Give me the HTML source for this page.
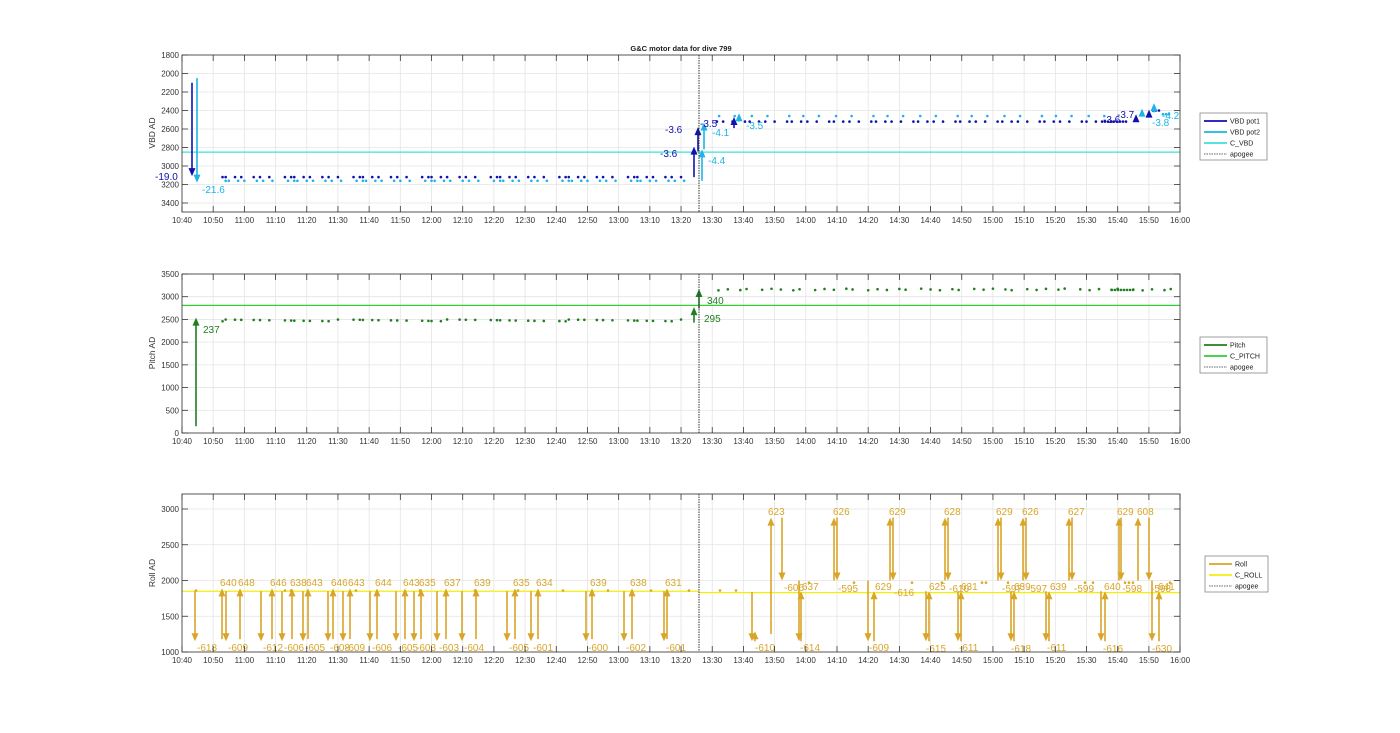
<!DOCTYPE html>
<html><head><meta charset="utf-8"><style>
html,body{margin:0;padding:0;background:#fff;}
svg{display:block;font-family:"Liberation Sans",sans-serif;}
</style></head><body>
<svg id="s" width="1400" height="733" viewBox="0 0 1400 733" xmlns="http://www.w3.org/2000/svg">
<rect width="1400" height="733" fill="#fff"/>
<text x="681" y="51" font-size="7.5" font-weight="bold" text-anchor="middle" fill="#222">G&amp;C motor data for dive 799</text>
<g id="g"></g>
</svg>
<script>
var NS="http://www.w3.org/2000/svg",G=document.getElementById('g');
function el(t,a,txt){var e=document.createElementNS(NS,t);for(var k in a)e.setAttribute(k,a[k]);if(txt!=null)e.textContent=txt;G.appendChild(e);return e;}
var L=182,R=1180;
function X(m){return L+(m-640)*3.119;}
function axes(top,bot,yticks,ymap){
  for(var m=640;m<=960;m+=10){var x=X(m);el('line',{x1:x,y1:top,x2:x,y2:bot,stroke:'#e4e4e4','stroke-width':0.8});}
  yticks.forEach(function(v){var y=ymap(v);el('line',{x1:L,y1:y,x2:R,y2:y,stroke:'#e4e4e4','stroke-width':0.8});});
}
function frame(top,bot,yticks,ymap,ylabel,ly){
  el('rect',{x:L,y:top,width:R-L,height:bot-top,fill:'none',stroke:'#444','stroke-width':0.9});
  for(var m=640;m<=960;m+=10){var x=X(m);el('line',{x1:x,y1:top,x2:x,y2:top+6,stroke:'#333','stroke-width':0.8});el('line',{x1:x,y1:bot,x2:x,y2:bot-6,stroke:'#333','stroke-width':0.8});
    var h=Math.floor(m/60),mm=m%60;el('text',{x:x,y:bot+11,'font-size':8,'text-anchor':'middle',fill:'#333'},h+':'+(mm<10?'0':'')+mm);}
  yticks.forEach(function(v){var y=ymap(v);el('line',{x1:L,y1:y,x2:L+6,y2:y,stroke:'#333','stroke-width':0.8});el('line',{x1:R,y1:y,x2:R-6,y2:y,stroke:'#333','stroke-width':0.8});
    el('text',{x:L-3,y:y+3,'font-size':8,'text-anchor':'end',fill:'#333'},v);});
  el('text',{x:0,y:0,'font-size':8.5,'text-anchor':'middle',fill:'#333',transform:'translate(155,'+ly+') rotate(-90)'},ylabel);
  el('line',{x1:699,y1:top,x2:699,y2:bot,stroke:'#333','stroke-width':1,'stroke-dasharray':'1.5,1'});
}
function arrow(x,y1,y2,c,w){w=w||1.6;var d=y2>y1?1:-1;el('line',{x1:x,y1:y1,x2:x,y2:y2-d*6,stroke:c,'stroke-width':w});
  el('polygon',{points:(x-3.5)+','+(y2-d*8)+' '+(x+3.5)+','+(y2-d*8)+' '+x+','+y2,fill:c});}
function dot(x,y,c){el('circle',{cx:x,cy:y,r:1.3,fill:c});}
function txt(x,y,s,c,fs){el('text',{x:x,y:y,'font-size':fs||10,fill:c},s);}
function legend(x,y,w,items){var h=items.length*11+3;el('rect',{x:x,y:y,width:w,height:h,fill:'#fff',stroke:'#888','stroke-width':0.8});
  items.forEach(function(it,i){var yy=y+8+i*11;el('line',{x1:x+4,y1:yy,x2:x+27,y2:yy,stroke:it[1],'stroke-width':it[2]?0.8:1.8,'stroke-dasharray':it[2]?'1.5,1':''});
  el('text',{x:x+30,y:yy+2.5,'font-size':7,fill:'#222'},it[0]);});}

/* ---------- TOP (VBD) ---------- */
var tT=55,tB=212;function yv(v){return 55+(v-1800)*0.0925;}
var tyt=[1800,2000,2200,2400,2600,2800,3000,3200,3400];
axes(tT,tB,tyt,yv);
var NV='#1010b0',CY='#1cb4e8',CV='#40e0d8';
el('line',{x1:L,y1:yv(2850),x2:R,y2:yv(2850),stroke:CV,'stroke-width':1.2});
var steps=[1,3,2,4,2,3,5,2];var t=653,i=0;
while(t<802){dot(X(t),yv(3120),NV);dot(X(t+1),yv(3160),CY);t+=steps[i++%8];}
t=811.5;i=0;while(t<942){dot(X(t),yv(2520),NV);if(i%2==0)dot(X(t+0.7),yv(2460),CY);t+=[2,3,4,1.5,3][i++%5];}
for(var k=0;k<8;k++)dot(1105+k*3,yv(2520),NV);
for(var k=0;k<3;k++){dot(1163+k*3,yv(2440),CY);dot(1153+k*3,yv(2400),NV);}
arrow(192,yv(2100),yv(3110),NV);arrow(197,yv(2050),yv(3180),CY);
txt(155,180,'-19.0',NV);txt(202,193,'-21.6',CY);
arrow(694,yv(3120),yv(2790),NV);arrow(698,yv(2840),yv(2580),NV);
arrow(702,yv(3160),yv(2820),CY);arrow(704,yv(2820),yv(2530),CY);
txt(660,157,'-3.6',NV);txt(665,133,'-3.6',NV);txt(700,127,'-3.5',NV);
txt(708,164,'-4.4',CY);txt(712,136,'-4.1',CY);
arrow(734,yv(2590),yv(2470),NV);arrow(739,yv(2520),yv(2430),CY);txt(746,129,'-3.5',CY);
arrow(1136,yv(2510),yv(2440),NV);arrow(1142,yv(2460),yv(2380),CY);
arrow(1149,yv(2470),yv(2390),NV);arrow(1154,yv(2420),yv(2320),CY);
txt(1103,123,'-3.6',NV);txt(1117,118,'-3.7',NV);txt(1152,126,'-3.8',CY);txt(1162,119,'-4.2',CY);
frame(tT,tB,tyt,yv,'VBD AD',133);
legend(1200,113,67,[['VBD pot1',NV],['VBD pot2',CY],['C_VBD',CV],['apogee','#333',1]]);

/* ---------- MIDDLE (Pitch) ---------- */
var mT=274,mB=433;function yp(v){return 433-v*0.04543;}
var myt=[0,500,1000,1500,2000,2500,3000,3500];
axes(mT,mB,myt,yp);
var PG='#1f7f1f',CP='#33cc33';
el('line',{x1:L,y1:yp(2810),x2:R,y2:yp(2810),stroke:CP,'stroke-width':1.2});
t=653;i=0;while(t<802){dot(X(t),yp(2460+((i*37)%40)),PG);t+=steps[i++%8];}
t=812;i=0;while(t<958){dot(X(t),yp(3140+((i*23)%40)),PG);t+=[3,4,2,5,3][i++%5];}
for(var k=0;k<8;k++)dot(1112+k*3,yp(3150),PG);
arrow(196,yp(150),yp(2540),PG);txt(203,333,'237',PG);
arrow(694,yp(2430),yp(2770),PG);txt(704,322,'295',PG);
arrow(699,yp(2740),yp(3170),PG);txt(707,304,'340',PG);
frame(mT,mB,myt,yp,'Pitch AD',353);
legend(1200,337,67,[['Pitch',PG],['C_PITCH',CP],['apogee','#333',1]]);

/* ---------- BOTTOM (Roll) ---------- */
var bT=494,bB=652;function yr(v){return 509+(3000-v)*0.0715;}
var byt=[1000,1500,2000,2500,3000];
axes(bT,bB,byt,yr);
var RO='#d8a528',CR='#f2ee10';
el('line',{x1:L,y1:yr(1850),x2:699,y2:yr(1850),stroke:CR,'stroke-width':1.2});
el('line',{x1:699,y1:yr(1830),x2:R,y2:yr(1830),stroke:CR,'stroke-width':1.2});
var ups=[[222,'640'],[240,'648'],[272,'646'],[292,'638'],[308,'643'],[333,'646'],[350,'643'],[377,'644'],[405,'643'],[421,'635'],[446,'637'],[476,'639'],[515,'635'],[538,'634'],[592,'639'],[632,'638'],[667,'631']];
var dns=[[195,'-618'],[226,'-609'],[261,'-612'],[282,'-606'],[303,'-605'],[328,'-608'],[343,'-609'],[370,'-606'],[396,'-605'],[414,'-603'],[437,'-603'],[462,'-604'],[507,'-605'],[531,'-601'],[586,'-600'],[624,'-602'],[664,'-601']];
ups.forEach(function(a){arrow(a[0],yr(1180),yr(1890),RO);txt(a[0]-2,586,a[1],RO);});
dns.forEach(function(a){arrow(a[0],yr(1850),yr(1150),RO);txt(a[0]+2,651,a[1],RO);});
[196,285,291,356,420,475,518,563,608,651,689].forEach(function(x){dot(x,yr(1860),RO);});
[720,736,809,854,912,942,982,986,1008,1085,1093,1125,1129,1133,1170].forEach(function(x,j){dot(x,yr(j<2?1860:1970),RO);});
arrow(752,yr(1840),yr(1150),RO);arrow(755,yr(1150),yr(1290),RO);txt(755,651,'-610',RO);
arrow(771,yr(1250),yr(2880),RO);txt(768,515,'623',RO);
arrow(782,yr(2880),yr(2000),RO);txt(784,591,'-606',RO);
arrow(799,yr(2000),yr(1150),RO);arrow(801,yr(1150),yr(1850),RO);txt(802,590,'637',RO);txt(800,651,'-614',RO);
arrow(834,yr(2000),yr(2880),RO);txt(833,515,'626',RO);arrow(837,yr(2880),yr(2000),RO);txt(838,592,'-595',RO);
arrow(868,yr(2000),yr(1150),RO);txt(869,651,'-609',RO);arrow(874,yr(1150),yr(1850),RO);txt(875,590,'629',RO);
arrow(890,yr(2000),yr(2880),RO);txt(889,515,'629',RO);arrow(893,yr(2880),yr(2000),RO);txt(894,596,'-616',RO);
arrow(926,yr(1850),yr(1150),RO);txt(926,652,'-615',RO);arrow(929,yr(1150),yr(1850),RO);txt(929,590,'625',RO);
arrow(945,yr(2000),yr(2880),RO);txt(944,515,'628',RO);arrow(948,yr(2880),yr(2000),RO);txt(949,592,'-610',RO);
arrow(958,yr(1850),yr(1150),RO);txt(959,651,'-611',RO);arrow(961,yr(1150),yr(1850),RO);txt(961,590,'631',RO);
arrow(998,yr(2000),yr(2880),RO);txt(996,515,'629',RO);arrow(1001,yr(2880),yr(2000),RO);txt(1002,592,'-597',RO);
arrow(1011,yr(1850),yr(1150),RO);txt(1011,652,'-618',RO);arrow(1014,yr(1150),yr(1850),RO);txt(1014,590,'639',RO);
arrow(1023,yr(2000),yr(2880),RO);txt(1022,515,'626',RO);arrow(1026,yr(2880),yr(2000),RO);txt(1027,592,'-597',RO);
arrow(1046,yr(1850),yr(1150),RO);txt(1047,651,'-611',RO);arrow(1049,yr(1150),yr(1850),RO);txt(1050,590,'639',RO);
arrow(1069,yr(2000),yr(2880),RO);txt(1068,515,'627',RO);arrow(1072,yr(2880),yr(2000),RO);txt(1074,592,'-599',RO);
arrow(1101,yr(1850),yr(1150),RO);txt(1103,652,'-616',RO);arrow(1105,yr(1150),yr(1850),RO);txt(1104,590,'640',RO);
arrow(1119,yr(2000),yr(2880),RO);txt(1117,515,'629',RO);arrow(1121,yr(2880),yr(2000),RO);txt(1122,592,'-598',RO);
arrow(1138,yr(2000),yr(2880),RO);txt(1137,515,'608',RO);
arrow(1149,yr(2880),yr(2000),RO);arrow(1152,yr(2000),yr(1150),RO);txt(1151,592,'-598',RO);txt(1152,652,'-630',RO);
arrow(1159,yr(1150),yr(1850),RO);txt(1158,590,'641',RO);
frame(bT,bB,byt,yr,'Roll AD',573);
legend(1205,556,63,[['Roll',RO],['C_ROLL',CR],['apogee','#333',1]]);
</script>
</body></html>
